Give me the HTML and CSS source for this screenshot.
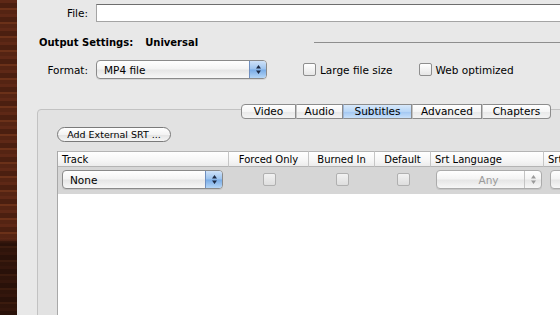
FILE: index.html
```html
<!DOCTYPE html>
<html>
  <head>
    <title>Output Settings</title>
    <link rel="stylesheet" href="styles.css">
  </head>
  <body>
    <div class="wood"></div>
    <div class="window">
      <div class="file-row">
        <label class="row-label">File:</label>
        <div class="file-field"></div>
      </div>

      <div class="output-row">
        <b>Output Settings:</b>
        <b class="preset">Universal</b>
        <div class="rule"></div>
      </div>

      <div class="format-row">
        <label class="row-label">Format:</label>
        <div class="popup format-popup">
          <span class="popup-text">MP4 file</span>
          <span class="popup-arrows">
            <svg width="7" height="11" viewBox="0 0 7 11"><path d="M3.5 1 L6 4.5 L1 4.5 Z M3.5 10 L6 6.5 L1 6.5 Z" fill="#1d2a44"/></svg>
          </span>
        </div>
        <span class="check"></span><span class="check-text">Large file size</span>
        <span class="check second"></span><span class="check-text">Web optimized</span>
      </div>

      <div class="tabbox">
        <div class="tabs">
          <span class="tab tab-video">Video</span>
          <span class="tab tab-audio">Audio</span>
          <span class="tab tab-subs selected">Subtitles</span>
          <span class="tab tab-adv">Advanced</span>
          <span class="tab tab-chap">Chapters</span>
        </div>

        <button class="srt-button">Add External SRT ...</button>

        <div class="grid">
          <div class="head left">Track</div>
          <div class="head">Forced Only</div>
          <div class="head">Burned In</div>
          <div class="head">Default</div>
          <div class="head left">Srt Language</div>
          <div class="head left">Srt Codeset</div>

          <div class="cell">
            <div class="popup track-popup">
              <span class="popup-text">None</span>
              <span class="popup-arrows">
                <svg width="7" height="11" viewBox="0 0 7 11"><path d="M3.5 1 L6 4.5 L1 4.5 Z M3.5 10 L6 6.5 L1 6.5 Z" fill="#1d2a44"/></svg>
              </span>
            </div>
          </div>
          <div class="cell center"><span class="check off"></span></div>
          <div class="cell center"><span class="check off"></span></div>
          <div class="cell center"><span class="check off"></span></div>
          <div class="cell">
            <div class="popup lang-popup off">
              <span class="popup-text">Any</span>
              <span class="popup-arrows">
                <svg width="7" height="11" viewBox="0 0 7 11"><path d="M3.5 1 L6 4.5 L1 4.5 Z M3.5 10 L6 6.5 L1 6.5 Z" fill="#9a9a9a"/></svg>
              </span>
            </div>
          </div>
          <div class="cell">
            <div class="popup code-popup off">
              <span class="popup-text">Any</span>
            </div>
          </div>
        </div>

        <div class="list"></div>
      </div>
    </div>
  </body>
</html>
```

FILE: styles.css
```css
html,
body {
  margin: 0;
  height: 100%;
}
body {
  display: flex;
  overflow: hidden;
  font-family: "DejaVu Sans", sans-serif;
  font-size: 10.5px;
  color: #000;
}
.wood {
  width: 17px;
  flex-shrink: 0;
  background:
    linear-gradient(180deg, rgba(0, 0, 0, 0) 0, rgba(0, 0, 0, 0) 238px, rgba(0, 0, 0, 0.45) 244px),
    repeating-linear-gradient(180deg, #5e2816 0 3px, #4b1f10 3px 8px, #6b3119 8px 10px, #552413 10px 14px);
}
.window {
  flex: 1;
  background-color: #e8e8e8;
  overflow: hidden;
}
.row-label {
  width: 71px;
  text-align: right;
  margin-right: 8px;
  flex-shrink: 0;
}
.file-row {
  display: flex;
  align-items: center;
  margin-top: 4px;
  height: 18px;
}
.file-field {
  flex: 1;
  height: 16px;
  margin-right: -10px;
  background: #fff;
  border: 1px solid #a4a4a4;
  border-top-color: #6e6e6e;
}
.output-row {
  display: flex;
  align-items: center;
  margin-top: 13px;
  height: 14px;
  padding-left: 22px;
  font-size: 10px;
}
.preset {
  margin-left: 12px;
}
.rule {
  flex: 1;
  height: 1px;
  margin-left: 116px;
  background-color: #8e8e8e;
}
.format-row {
  display: flex;
  align-items: center;
  margin-top: 11px;
  height: 19px;
}
.popup {
  display: flex;
  align-items: center;
  box-sizing: border-box;
  height: 19px;
  border: 1px solid #8a8a8a;
  border-radius: 4px;
  background: linear-gradient(180deg, #ffffff 0%, #f4f4f4 45%, #e6e6e6 55%, #f7f7f7 100%);
  box-shadow: 0 1px 0 rgba(0, 0, 0, 0.08);
}
.popup-text {
  flex: 1;
  padding-left: 7px;
}
.popup-arrows {
  width: 16px;
  align-self: stretch;
  display: flex;
  align-items: center;
  justify-content: center;
  border-left: 1px solid #6f8fc0;
  border-radius: 0 3px 3px 0;
  background: linear-gradient(180deg, #cfe2f8 0%, #9cc3ee 48%, #78abe6 52%, #b5d6f7 100%);
}
.format-popup {
  width: 171px;
}
.check {
  box-sizing: border-box;
  width: 13px;
  height: 13px;
  border: 1px solid #8e8e8e;
  border-radius: 2px;
  background: linear-gradient(180deg, #ffffff, #e6e6e6);
  flex-shrink: 0;
}
.format-row .check {
  margin-left: 36px;
}
.format-row .check.second {
  margin-left: 26px;
}
.check-text {
  margin-left: 4px;
}
.tabbox {
  margin-top: 30px;
  margin-left: 20px;
  margin-right: -10px;
  height: 300px;
  border: 1px solid #c2c2c2;
  border-radius: 4px 0 0 0;
  background-color: #e2e2e2;
  padding-left: 19px;
}
.tabs {
  display: flex;
  margin-top: -6px;
  margin-left: 184px;
  height: 15px;
}
.tab {
  box-sizing: border-box;
  height: 15px;
  line-height: 13px;
  text-align: center;
  border: 1px solid #8c8c8c;
  border-left: 1px solid #c4c4c4;
  background: linear-gradient(180deg, #ffffff 0%, #f5f5f5 50%, #e9e9e9 55%, #f3f3f3 100%);
}
.tab-video {
  width: 55px;
  border-left-color: #8c8c8c;
  border-radius: 4px 0 0 4px;
}
.tab-audio {
  width: 47px;
}
.tab-subs {
  width: 69px;
}
.tab-adv {
  width: 70px;
}
.tab-chap {
  width: 69px;
  border-radius: 0 4px 4px 0;
}
.tab.selected {
  background: linear-gradient(180deg, #d8e9fb 0%, #b8d6f6 50%, #a4c8f2 55%, #c9e1fa 100%);
  border-left-color: #9bb4d6;
}
.srt-button {
  display: block;
  box-sizing: border-box;
  margin-top: 8px;
  width: 114px;
  height: 15px;
  padding: 0;
  border: 1px solid #7a7a7a;
  border-radius: 8px;
  font-family: "DejaVu Sans", sans-serif;
  font-size: 9.5px;
  line-height: 12px;
  color: #000;
  background: linear-gradient(180deg, #ffffff 0%, #f3f3f3 50%, #e4e4e4 55%, #f5f5f5 100%);
}
.grid {
  display: grid;
  grid-template-columns: 171px 80px 66px 56px 113px 100px;
  grid-template-rows: 16px 27px;
  margin-top: 9px;
  border-left: 1px solid #a8a8a8;
}
.head {
  box-sizing: border-box;
  font-size: 10px;
  line-height: 15px;
  text-align: center;
  border-top: 1px solid #b4b4b4;
  border-bottom: 1px solid #b4b4b4;
  border-right: 1px solid #c6c6c6;
  white-space: nowrap;
  overflow: hidden;
  background: linear-gradient(180deg, #ffffff 0%, #f6f6f6 60%, #ececec 100%);
}
.head.left {
  text-align: left;
  padding-left: 4px;
}
.cell {
  display: flex;
  align-items: flex-start;
  padding-top: 3px;
  background-color: #d6d6d6;
}
.cell.center {
  justify-content: center;
  padding-top: 6px;
}
.check.off {
  border-color: #b0b0b0;
  background: linear-gradient(180deg, #f2f2f2, #dedede);
}
.track-popup {
  width: 161px;
  margin-left: 4px;
}
.lang-popup {
  width: 106px;
  margin-left: 5px;
}
.code-popup {
  width: 40px;
  margin-left: 6px;
}
.popup.off {
  border-color: #ababab;
  color: #9a9a9a;
  text-align: center;
}
.popup.off .popup-text {
  padding-left: 16px;
}
.popup.off .popup-arrows {
  border-left-color: #c4c4c4;
  background: none;
}
.list {
  height: 200px;
  background-color: #fff;
  border-left: 1px solid #a8a8a8;
}
```
